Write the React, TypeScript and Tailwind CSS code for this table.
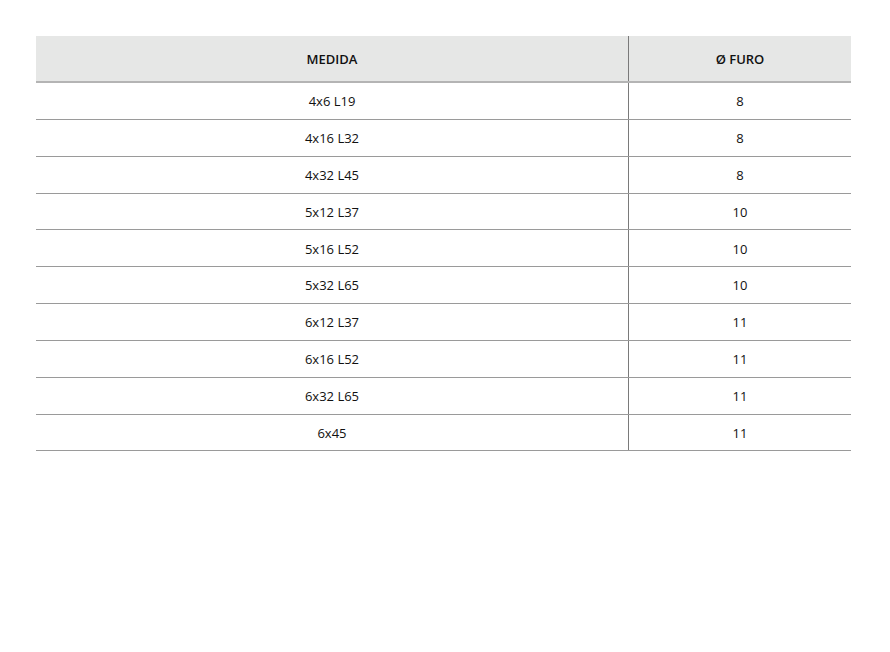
import React from "react";

const rows: [string, string][] = [
  ["4x6 L19", "8"],
  ["4x16 L32", "8"],
  ["4x32 L45", "8"],
  ["5x12 L37", "10"],
  ["5x16 L52", "10"],
  ["5x32 L65", "10"],
  ["6x12 L37", "11"],
  ["6x16 L52", "11"],
  ["6x32 L65", "11"],
  ["6x45", "11"],
];

export default function App() {
  return (
    <div
      className="w-[890px] h-[652px] bg-white pt-[36px] pl-[36px]"
      style={{ fontFamily: '"Open Sans", "Noto Sans", sans-serif' }}
    >
      <div className="w-[815px] text-[13px] text-[#111111]">
        <div className="flex h-[47px] bg-[#e6e7e6] border-b-2 border-[#b4b4b4]">
          <div className="w-[593px] border-r border-[#7a7a7a] flex items-center justify-center font-semibold pt-[3px]">
            MEDIDA
          </div>
          <div className="flex-1 flex items-center justify-center font-semibold pt-[3px]">
            Ø FURO
          </div>
        </div>
        {rows.map(([a, b], i) => (
          <div
            key={i}
            className="flex h-[36.85px] border-b border-[#9a9a9a]"
          >
            <div className="w-[593px] border-r border-[#7a7a7a] flex items-center justify-center pt-[2px]">
              {a}
            </div>
            <div className="flex-1 flex items-center justify-center pt-[2px]">{b}</div>
          </div>
        ))}
      </div>
    </div>
  );
}
